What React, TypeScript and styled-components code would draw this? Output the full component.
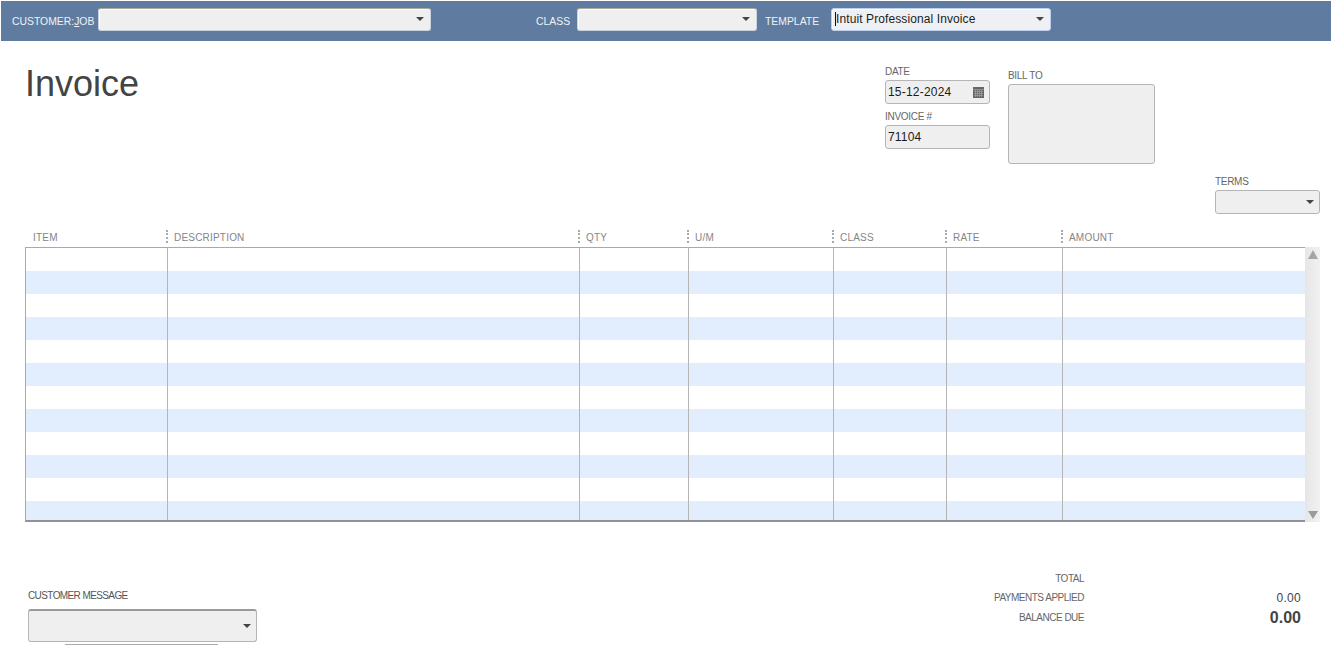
import styled, { createGlobalStyle } from 'styled-components'

const GlobalStyle = createGlobalStyle`
  html, body {
    margin: 0;
    padding: 0;
    height: 645px;
    overflow: hidden;
    background: #fff;
    font-family: "Liberation Sans", Arial, sans-serif;
  }
  * { box-sizing: border-box; }
`

const COLUMNS = [
  { name: 'ITEM', width: 142 },
  { name: 'DESCRIPTION', width: 412 },
  { name: 'QTY', width: 109 },
  { name: 'U/M', width: 145 },
  { name: 'CLASS', width: 113 },
  { name: 'RATE', width: 116 },
  { name: 'AMOUNT', width: 242 },
]

const ROWS = Array.from({ length: 12 }, (_, i) => i)

const Page = styled.div`
  width: 1331px;
  height: 645px;
  overflow: hidden;
  display: flex;
  flex-direction: column;
`

const Toolbar = styled.div`
  margin: 1px 0 0 1px;
  height: 40px;
  flex-shrink: 0;
  background: #5f7ca0;
  display: flex;
  align-items: flex-start;
  padding-top: 7px;
`

const ToolLabel = styled.label<{ $width: number; $left?: number }>`
  width: ${p => p.$width}px;
  margin-left: ${p => p.$left ?? 0}px;
  padding-top: 7px;
  font-size: 10.4px;
  line-height: 13px;
  color: #eef2f6;
  white-space: nowrap;
`

const Underlined = styled.span`
  text-decoration: underline;
`

const ToolCombo = styled.div<{ $width: number; $focused?: boolean }>`
  width: ${p => p.$width}px;
  height: 23px;
  background: ${p => (p.$focused ? '#eef0f4' : '#efefef')};
  border: 1px solid ${p => (p.$focused ? '#bcd0ee' : '#c9d3df')};
  border-top-color: ${p => (p.$focused ? '#bcd0ee' : '#a9a9a2')};
  border-radius: 3px;
  box-shadow: inset 1px 1px 0 #fbfbfb;
  display: flex;
  align-items: center;
  justify-content: space-between;
  padding: 0 6px 2px 3px;
`

const ComboText = styled.span`
  font-size: 12px;
  color: #1c1c1c;
  white-space: nowrap;
  letter-spacing: 0.1px;
  border-left: 1px solid #111;
`

const Arrow = styled.span`
  margin-left: auto;
  width: 0;
  height: 0;
  border-left: 4px solid transparent;
  border-right: 4px solid transparent;
  border-top: 4px solid #444;
`

const Head = styled.div`
  height: 189px;
  flex-shrink: 0;
  display: flex;
  align-items: flex-start;
`

const Title = styled.h1`
  margin: 22px 0 0 25px;
  width: 860px;
  font-size: 36px;
  line-height: 42px;
  font-weight: 400;
  color: #444;
`

const DateColumn = styled.div`
  width: 105px;
  padding-top: 25px;
  display: flex;
  flex-direction: column;
`

const FieldLabel = styled.div`
  font-size: 10px;
  letter-spacing: -0.3px;
  line-height: 12px;
  height: 14px;
  color: #666;
  white-space: nowrap;
`

const InputBox = styled.div`
  height: 24px;
  background: #efefef;
  border: 1px solid #b5b5b5;
  border-radius: 3px;
  display: flex;
  align-items: center;
  justify-content: space-between;
  padding: 0 5px 0 2px;
  font-size: 12px;
  color: #1c1c1c;
  margin-bottom: 7px;
  letter-spacing: 0.2px;
`

const BillColumn = styled.div`
  width: 147px;
  margin-left: 18px;
  padding-top: 29px;
`

const BillBox = styled.div`
  height: 80px;
  background: #efefef;
  border: 1px solid #b5b5b5;
  border-radius: 3px;
`

const TermsColumn = styled.div`
  width: 105px;
  margin-left: 60px;
  padding-top: 135px;
`

const TermsCombo = styled.div`
  height: 24px;
  background: #efefef;
  border: 1px solid #b5b5b5;
  border-radius: 3px;
  display: flex;
  align-items: center;
  padding: 0 5px 0 3px;
`

const GridHeader = styled.div`
  height: 17px;
  margin-left: 25px;
  display: flex;
  flex-shrink: 0;
`

const HeaderCell = styled.div<{ $width: number; $first?: boolean }>`
  width: ${p => p.$width}px;
  position: relative;
  padding-left: ${p => (p.$first ? 8 : 7)}px;
  font-size: 10px;
  line-height: 15px;
  color: #858585;
  letter-spacing: 0.2px;
`

const Grip = styled.span`
  position: absolute;
  left: -1px;
  top: 0;
  height: 13px;
  border-left: 2px dotted #aaa;
`

const GridWrap = styled.div`
  margin-left: 25px;
  width: 1295px;
  height: 275px;
  flex-shrink: 0;
  display: flex;
`

const GridBody = styled.div`
  width: 1280px;
  height: 275px;
  overflow: hidden;
  border-top: 1px solid #a9a9a9;
  border-bottom: 2px solid #8f9296;
  border-left: 1px solid #a9a9a9;
`

const GridRow = styled.div<{ $striped: boolean }>`
  height: 23px;
  display: flex;
  background: ${p => (p.$striped ? '#e2edfd' : '#fff')};
`

const GridCell = styled.div<{ $width: number; $first?: boolean }>`
  width: ${p => (p.$first ? p.$width - 1 : p.$width)}px;
  border-left: ${p => (p.$first ? 'none' : '1px solid #b5b5b5')};
`

const ScrollBar = styled.div`
  width: 15px;
  height: 275px;
  background: linear-gradient(to right, #e6e6e6, #f1f1f1);
  display: flex;
  flex-direction: column;
  align-items: center;
  justify-content: space-between;
  padding: 3px 0 3px;
`

const ScrollArrow = styled.span<{ $down?: boolean }>`
  width: 0;
  height: 0;
  border-left: 5px solid transparent;
  border-right: 5px solid transparent;
  ${p => (p.$down ? 'border-top: 8px solid #9b9b9b;' : 'border-bottom: 9px solid #a5a5a5;')}
`

const Footer = styled.div`
  flex: 1;
  display: flex;
  align-items: flex-start;
`

const MessageColumn = styled.div`
  width: 229px;
  margin-left: 28px;
  padding-top: 68px;
`

const MessageLabel = styled.div`
  font-size: 10px;
  letter-spacing: -0.6px;
  line-height: 12px;
  height: 19px;
  color: #555;
  white-space: nowrap;
`

const MessageCombo = styled.div`
  height: 33px;
  background: #efefef;
  border: 1px solid #b5b5b5;
  border-top: 2px solid #999;
  border-radius: 3px;
  display: flex;
  align-items: center;
  padding: 0 5px 0 3px;
`

const MessageRule = styled.div`
  width: 153px;
  margin: 2px 0 0 37px;
  border-top: 1px solid #aaa;
`

const Totals = styled.div`
  width: 307px;
  margin-left: 737px;
  padding-top: 47px;
  display: flex;
  flex-direction: column;
`

const TotalRow = styled.div<{ $height: number }>`
  height: ${p => p.$height}px;
  display: flex;
  align-items: center;
  justify-content: space-between;
`

const TotalLabel = styled.span`
  width: 90px;
  text-align: right;
  font-size: 10px;
  letter-spacing: -0.5px;
  color: #666;
  white-space: nowrap;
`

const TotalValue = styled.span<{ $bold?: boolean }>`
  font-size: ${p => (p.$bold ? 16 : 12)}px;
  font-weight: ${p => (p.$bold ? 700 : 400)};
  color: #444;
  letter-spacing: ${p => (p.$bold ? 0 : 0.3)}px;
`

const CalendarIcon = () => (
  <svg width="11" height="11" viewBox="0 0 11 11">
    <rect width="11" height="11" fill="#666" />
    <path d="M0 2.5h11M1 4.5h9M1 6.5h9M1 8.5h9M2.5 3v7M4.5 3v7M6.5 3v7M8.5 3v7" stroke="#aaa" strokeWidth="0.6" />
  </svg>
)

const App = () => {
  return (
    <>
      <GlobalStyle />
      <Page>
        <Toolbar>
          <ToolLabel $width={86} $left={11}>
            CUSTOMER:<Underlined>J</Underlined>OB
          </ToolLabel>
          <ToolCombo $width={333}>
            <Arrow />
          </ToolCombo>
          <ToolLabel $width={41} $left={105}>CLASS</ToolLabel>
          <ToolCombo $width={180}>
            <Arrow />
          </ToolCombo>
          <ToolLabel $width={66} $left={8}>TEMPLATE</ToolLabel>
          <ToolCombo $width={220} $focused>
            <ComboText>Intuit Professional Invoice</ComboText>
            <Arrow />
          </ToolCombo>
        </Toolbar>
        <Head>
          <Title>Invoice</Title>
          <DateColumn>
            <FieldLabel>DATE</FieldLabel>
            <InputBox>
              15-12-2024
              <CalendarIcon />
            </InputBox>
            <FieldLabel>INVOICE #</FieldLabel>
            <InputBox>71104</InputBox>
          </DateColumn>
          <BillColumn>
            <FieldLabel>BILL TO</FieldLabel>
            <BillBox />
          </BillColumn>
          <TermsColumn>
            <FieldLabel>TERMS</FieldLabel>
            <TermsCombo>
              <Arrow />
            </TermsCombo>
          </TermsColumn>
        </Head>
        <GridHeader>
          {COLUMNS.map((col, i) => (
            <HeaderCell key={col.name} $width={col.width} $first={i === 0}>
              {i > 0 && <Grip />}
              {col.name}
            </HeaderCell>
          ))}
        </GridHeader>
        <GridWrap>
          <GridBody>
            {ROWS.map(row => (
              <GridRow key={row} $striped={row % 2 === 1}>
                {COLUMNS.map((col, i) => (
                  <GridCell key={col.name} $width={col.width} $first={i === 0} />
                ))}
              </GridRow>
            ))}
          </GridBody>
          <ScrollBar>
            <ScrollArrow />
            <ScrollArrow $down />
          </ScrollBar>
        </GridWrap>
        <Footer>
          <MessageColumn>
            <MessageLabel>CUSTOMER MESSAGE</MessageLabel>
            <MessageCombo>
              <Arrow />
            </MessageCombo>
            <MessageRule />
          </MessageColumn>
          <Totals>
            <TotalRow $height={19}>
              <TotalLabel>TOTAL</TotalLabel>
            </TotalRow>
            <TotalRow $height={19}>
              <TotalLabel>PAYMENTS APPLIED</TotalLabel>
              <TotalValue>0.00</TotalValue>
            </TotalRow>
            <TotalRow $height={21}>
              <TotalLabel>BALANCE DUE</TotalLabel>
              <TotalValue $bold>0.00</TotalValue>
            </TotalRow>
          </Totals>
        </Footer>
      </Page>
    </>
  )
}

export default App
